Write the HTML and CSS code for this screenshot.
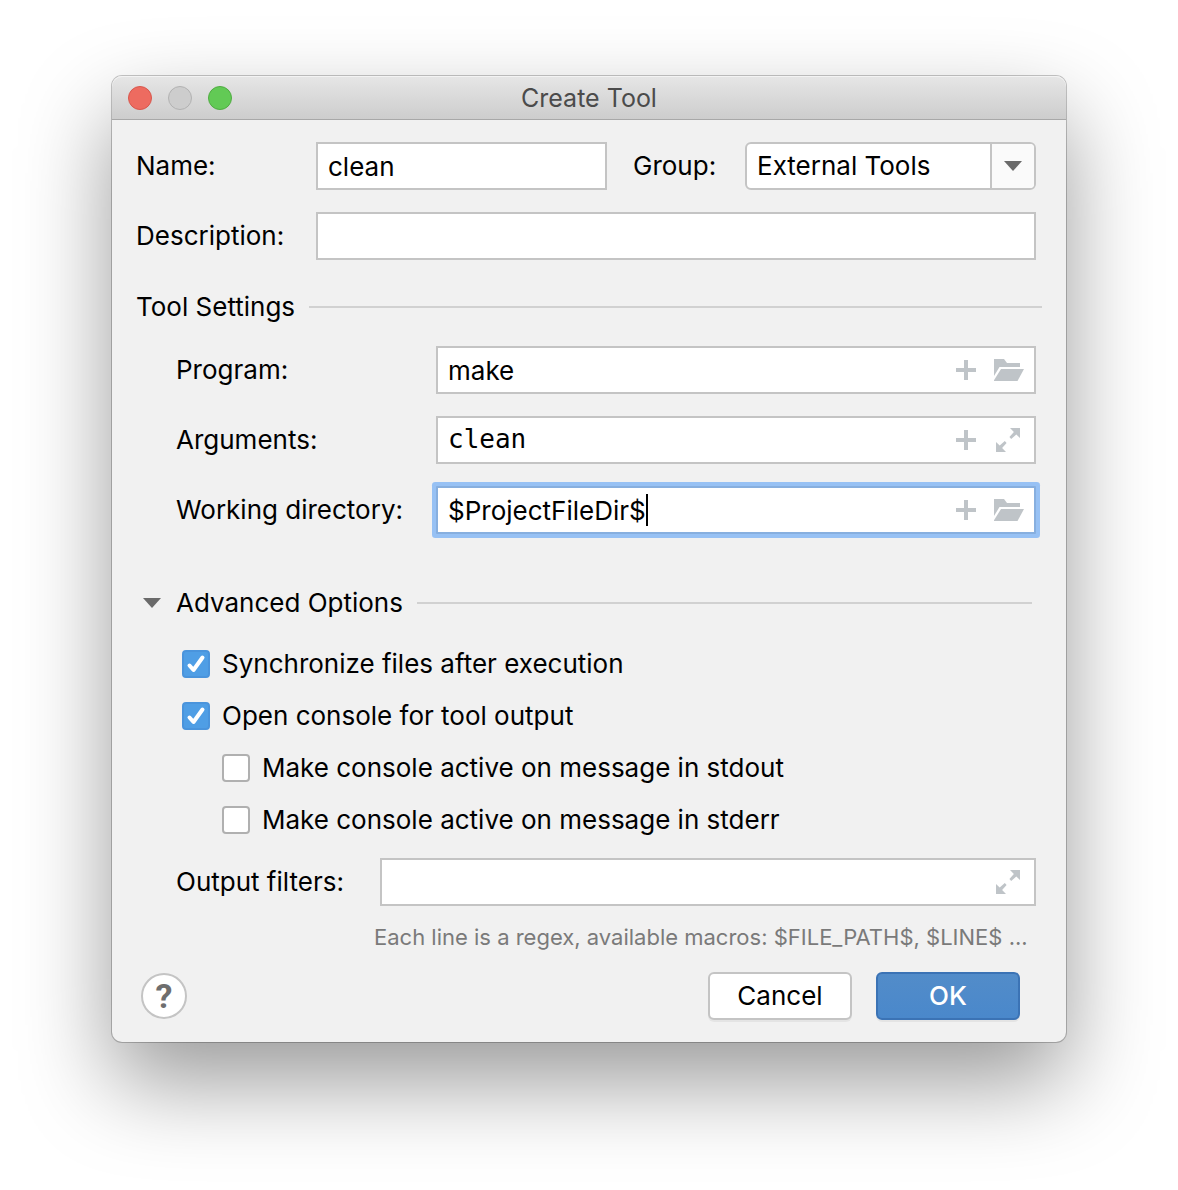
FILE: index.html
```html
<!DOCTYPE html>
<html lang="en">
<head>
<meta charset="utf-8">
<meta name="viewport" content="width=device-width, initial-scale=1">
<title>Create Tool</title>
<link rel="stylesheet" href="styles.css">
</head>
<body>
<svg class="symbols" aria-hidden="true">
  <symbol id="plus" viewBox="0 0 20 20"><path d="M8 0h4v8h8v4h-8v8H8v-8H0V8h8z"/></symbol>
  <symbol id="folder" viewBox="0 0 30 22"><path d="M0 0h10l3 4h13v4H5.500L0 17z"/><path d="M7 10h23l-6.500 12H0v-.7z"/></symbol>
  <symbol id="expand" viewBox="0 0 24 24"><path d="M14 0h10v10l-3.700-3.600-5.100 4.500-1.800-1.800 4.500-5.200z"/><path d="M10 24H0V14l3.700 3.600 5.100-4.500 1.800 1.800-4.500 5.200z"/></symbol>
  <symbol id="down" viewBox="0 0 18 10"><path d="M0 0h18L9 10z"/></symbol>
  <symbol id="tick" viewBox="0 0 28 28"><path d="M7.500 15.500l4 4.500L20.500 7.500"/></symbol>
</svg>
<main class="window">
  <header class="titlebar">
    <div class="lights">
      <button class="light light-close" type="button" aria-label="Close"></button>
      <button class="light light-minimize" type="button" aria-label="Minimize" disabled></button>
      <button class="light light-zoom" type="button" aria-label="Zoom"></button>
    </div>
    <h1 class="title">Create Tool</h1>
  </header>
  <form class="content">
    <div class="general">
      <label for="name">Name:</label>
      <input class="field" id="name" type="text" value="clean">
      <label class="group-label" for="group">Group:</label>
      <div class="combo">
        <select id="group"><option>External Tools</option></select>
        <span class="combo-arrow"><svg class="triangle"><use href="#down"/></svg></span>
      </div>
      <label for="description">Description:</label>
      <input class="field wide" id="description" type="text">
    </div>

    <section>
      <h2 class="heading">Tool Settings</h2>
      <div class="settings">
        <label for="program">Program:</label>
        <div class="field with-icons">
          <input id="program" type="text" value="make">
          <button class="icon" type="button" aria-label="Insert macro"><svg class="plus"><use href="#plus"/></svg></button>
          <button class="icon last-icon" type="button" aria-label="Browse"><svg class="folder"><use href="#folder"/></svg></button>
        </div>
        <label for="arguments">Arguments:</label>
        <div class="field with-icons">
          <input class="mono" id="arguments" type="text" value="clean">
          <button class="icon" type="button" aria-label="Insert macro"><svg class="plus"><use href="#plus"/></svg></button>
          <button class="icon last-icon" type="button" aria-label="Expand"><svg class="expand"><use href="#expand"/></svg></button>
        </div>
        <label for="directory">Working directory:</label>
        <div class="field with-icons focused">
          <div class="editing"><input id="directory" type="text" value="$ProjectFileDir$"><span class="caret"></span></div>
          <button class="icon" type="button" aria-label="Insert macro"><svg class="plus"><use href="#plus"/></svg></button>
          <button class="icon last-icon" type="button" aria-label="Browse"><svg class="folder"><use href="#folder"/></svg></button>
        </div>
      </div>
    </section>

    <section class="advanced">
      <h2 class="heading advanced-heading">
        <button class="disclosure" type="button" aria-expanded="true"><svg class="triangle"><use href="#down"/></svg>Advanced Options</button>
      </h2>
      <div class="checks">
        <label class="check"><span class="box"><input type="checkbox" checked><svg class="tick"><use href="#tick"/></svg></span>Synchronize files after execution</label>
        <label class="check"><span class="box"><input type="checkbox" checked><svg class="tick"><use href="#tick"/></svg></span>Open console for tool output</label>
        <label class="check nested"><span class="box"><input type="checkbox"></span>Make console active on message in stdout</label>
        <label class="check nested"><span class="box"><input type="checkbox"></span>Make console active on message in stderr</label>
      </div>
      <div class="filters">
        <label for="filters">Output filters:</label>
        <div class="field with-icons">
          <input id="filters" type="text" aria-describedby="filters-hint">
          <button class="icon last-icon" type="button" aria-label="Expand"><svg class="expand"><use href="#expand"/></svg></button>
        </div>
      </div>
      <p class="hint" id="filters-hint">Each line is a regex, available macros: $FILE_PATH$, $LINE$ ...</p>
    </section>

    <footer class="actions">
      <button class="help" type="button" aria-label="Help">?</button>
      <button class="button" type="button">Cancel</button>
      <button class="button primary" type="submit">OK</button>
    </footer>
  </form>
</main>
</body>
</html>
```
FILE: styles.css
```css
*, *::before, *::after { box-sizing: border-box; }

body {
  margin: 0;
  padding: 76px 112px 148px;
  background: #fff;
  color: #000;
  font: 26px/30px Inter, "Liberation Sans", sans-serif;
}

input, select, button { font: inherit; color: inherit; margin: 0; }
button { padding: 0; border: 0; background: none; }
.symbols { display: none; }

.window {
  min-width: 860px;
  border-radius: 10px;
  background: #f1f1f1;
  box-shadow: 0 0 0 1px rgba(0, 0, 0, .22), 0 40px 90px rgba(0, 0, 0, .4);
}

/* Title bar */
.titlebar {
  display: grid;
  grid-template-columns: 1fr auto 1fr;
  align-items: center;
  height: 44px;
  padding: 0 16px;
  border-bottom: 1px solid #a8a8a8;
  border-radius: 10px 10px 0 0;
  background: linear-gradient(#e6e6e6, #cdcdcd);
  box-shadow: inset 0 1px #f3f3f3;
}
.lights { display: flex; gap: 16px; }
.light { width: 24px; height: 24px; border: 1px solid; border-radius: 50%; }
.light-close { background: #ed6b60; border-color: #d8574d; }
.light-minimize { background: #cdcdcd; border-color: #b2b2b2; }
.light-zoom { background: #62ca55; border-color: #50ac42; }
.title { margin: 0; color: #4b4b4b; font-size: 25px; font-weight: 400; }

/* Fields */
.content { padding: 22px 30px 22px 24px; }
.general {
  display: grid;
  grid-template-columns: 180px 1fr 138px 1fr;
  row-gap: 22px;
  align-items: center;
}
.group-label { padding-left: 26px; }
.wide { grid-column: 2 / -1; }
.field {
  width: 100%;
  min-width: 0;
  height: 48px;
  padding: 0 10px;
  border: 2px solid #c4c4c4;
  border-radius: 0;
  background: #fff;
}
.with-icons { display: flex; align-items: center; gap: 18px; }
.with-icons input {
  flex: 1;
  min-width: 0;
  height: 44px;
  padding: 0;
  border: 0;
  outline: 0;
  background: none;
}
.with-icons .mono { padding-bottom: 2px; font: 26px/30px "DejaVu Sans Mono", monospace; }
.focused { border-color: #87afdf; border-radius: 1px; box-shadow: 0 0 0 4px #97c1f4; }
.editing { display: flex; flex: 1; align-items: center; min-width: 0; }
.editing input { flex: none; field-sizing: content; }
.caret { width: 2px; height: 32px; background: #000; }

.icon { display: flex; justify-content: center; color: #bfc4c8; }
.last-icon { justify-content: flex-start; width: 30px; }
.icon svg { fill: currentColor; }
.plus { width: 20px; height: 20px; }
.folder { width: 30px; height: 22px; }
.expand { width: 24px; height: 24px; margin-left: 2px; }
.triangle { width: 18px; height: 10px; fill: #6a6a6a; }

.combo {
  display: grid;
  grid-template-columns: 1fr 44px;
  height: 48px;
  border: 2px solid #c4c4c4;
  border-radius: 6px;
  background: #fff;
  overflow: hidden;
}
.combo select {
  grid-area: 1 / 1 / 2 / 3;
  width: 100%;
  padding: 0 54px 0 10px;
  border: 0;
  outline: 0;
  background: none;
  appearance: none;
}
.combo-arrow {
  grid-area: 1 / 2;
  display: grid;
  place-items: center;
  border-left: 2px solid #c4c4c4;
  background: #fafafa;
  pointer-events: none;
}

/* Sections */
.heading {
  display: flex;
  align-items: center;
  gap: 14px;
  margin: 32px -6px 24px 0;
  font-size: 26px;
  font-weight: 400;
}
.heading::after { content: ""; flex: 1; height: 2px; background: #d1d1d1; }
.settings {
  display: grid;
  grid-template-columns: 260px 1fr;
  row-gap: 22px;
  align-items: center;
  padding-left: 40px;
}
.advanced-heading { margin: 54px 4px 20px 7px; }
.disclosure { display: flex; align-items: center; gap: 15px; }
.checks { padding-left: 46px; }
.check { display: flex; align-items: center; gap: 12px; height: 52px; }
.nested { padding-left: 40px; }
.box { display: grid; width: 28px; height: 28px; }
.box input {
  grid-area: 1 / 1;
  width: 28px;
  height: 28px;
  border: 2px solid #b0b0b0;
  border-radius: 4px;
  background: #fff;
  appearance: none;
}
.box input:checked { border-color: #4a94dc; background: #4f9ee5; }
.tick {
  grid-area: 1 / 1;
  width: 28px;
  height: 28px;
  fill: none;
  stroke: #fff;
  stroke-width: 4;
  stroke-linecap: round;
  stroke-linejoin: round;
  pointer-events: none;
}
.filters {
  display: grid;
  grid-template-columns: 204px 1fr;
  align-items: center;
  margin-top: 12px;
  padding-left: 40px;
}
.hint {
  margin: 16px -6px 0 238px;
  color: #7a7a7a;
  font-size: 22px;
  white-space: nowrap;
  overflow: hidden;
}

/* Buttons */
.actions { display: flex; align-items: center; gap: 24px; margin-top: 20px; padding: 0 16px 0 5px; }
.help {
  width: 46px;
  height: 46px;
  margin-right: auto;
  border: 2px solid #c4c4c4;
  border-radius: 50%;
  background: #fff;
  color: #6e6e6e;
  font: 700 34px/40px Roboto, sans-serif;
}
.button {
  width: 144px;
  height: 48px;
  border: 2px solid #c4c4c4;
  border-radius: 6px;
  background: #fff;
  box-shadow: 0 2px rgba(0, 0, 0, .05);
}
.primary {
  border-color: #3b73b5;
  background: linear-gradient(#528cc9, #4a88cb);
  color: #fff;
  font-weight: 500;
}
```
